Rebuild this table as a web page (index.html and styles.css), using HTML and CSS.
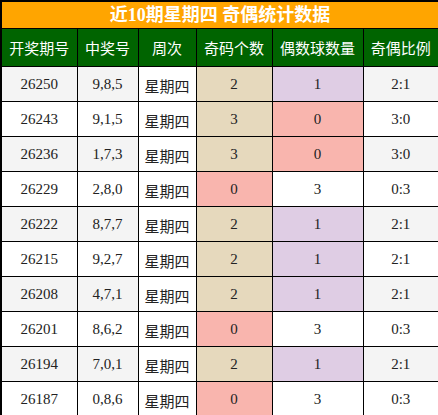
FILE: index.html
```html
<!DOCTYPE html>
<html>
<head>
    <meta charset="utf-8">
    <title>奇偶统计数据</title>
    <link rel="stylesheet" href="styles.css">
</head>
<body>
    <table class="stats">
        <colgroup>
            <col style="width: 76px">
            <col style="width: 61px">
            <col style="width: 58px">
            <col style="width: 76px">
            <col style="width: 91px">
            <col style="width: 76px">
        </colgroup>
        <thead>
            <tr><th class="title" colspan="6">近10期星期四 奇偶统计数据</th></tr>
            <tr class="head">
                <th>开奖期号</th><th>中奖号</th><th>周次</th><th>奇码个数</th><th>偶数球数量</th><th>奇偶比例</th>
            </tr>
        </thead>
        <tbody>
            <tr><td>26250</td><td>9,8,5</td><td class="week">星期四</td><td class="tan">2</td><td class="lilac">1</td><td>2:1</td></tr>
            <tr><td>26243</td><td>9,1,5</td><td class="week">星期四</td><td class="tan">3</td><td class="pink">0</td><td>3:0</td></tr>
            <tr><td>26236</td><td>1,7,3</td><td class="week">星期四</td><td class="tan">3</td><td class="pink">0</td><td>3:0</td></tr>
            <tr><td>26229</td><td>2,8,0</td><td class="week">星期四</td><td class="pink">0</td><td>3</td><td>0:3</td></tr>
            <tr><td>26222</td><td>8,7,7</td><td class="week">星期四</td><td class="tan">2</td><td class="lilac">1</td><td>2:1</td></tr>
            <tr><td>26215</td><td>9,2,7</td><td class="week">星期四</td><td class="tan">2</td><td class="lilac">1</td><td>2:1</td></tr>
            <tr><td>26208</td><td>4,7,1</td><td class="week">星期四</td><td class="tan">2</td><td class="lilac">1</td><td>2:1</td></tr>
            <tr><td>26201</td><td>8,6,2</td><td class="week">星期四</td><td class="pink">0</td><td>3</td><td>0:3</td></tr>
            <tr><td>26194</td><td>7,0,1</td><td class="week">星期四</td><td class="tan">2</td><td class="lilac">1</td><td>2:1</td></tr>
            <tr><td>26187</td><td>0,8,6</td><td class="week">星期四</td><td class="pink">0</td><td>3</td><td>0:3</td></tr>
        </tbody>
    </table>
</body>
</html>
```

FILE: styles.css
```css
body {
    margin: 0;
    background: #ffffff;
    font-family: "Liberation Serif", "Noto Sans CJK SC", serif;
}

.stats {
    width: 438px;
    border-collapse: collapse;
    table-layout: fixed;
    border: 2px solid #000;
}

.stats th,
.stats td {
    border: 1px solid #000;
    text-align: center;
    padding: 0;
}

.title {
    height: 26px;
    background-color: #ffa500;
    color: #fff;
    font-size: 18px;
    font-weight: bold;
    line-height: 26px;
}

.head th {
    height: 37px;
    background-color: #006400;
    color: #fff;
    font-family: "Noto Sans CJK SC", sans-serif;
    font-size: 15px;
    font-weight: normal;
    line-height: 20px;
}

.stats td {
    height: 34px;
    font-size: 15px;
    line-height: 20px;
    color: #222;
}

.stats tbody tr:nth-child(odd) td {
    background-color: #f4f4f4;
}

.stats tbody tr:nth-child(even) td {
    background-color: #fff;
}

.stats tbody tr td.week {
    height: 30px;
    padding-top: 4px;
    background-color: #fff;
    font-family: "Noto Sans CJK SC", sans-serif;
    font-size: 15px;
}

.stats tbody tr td.tan {background-color: #e6d9bd;}
.stats tbody tr td.lilac {background-color: #dfcde4;}
.stats tbody tr td.pink {background-color: #f9b5ae;}
```
